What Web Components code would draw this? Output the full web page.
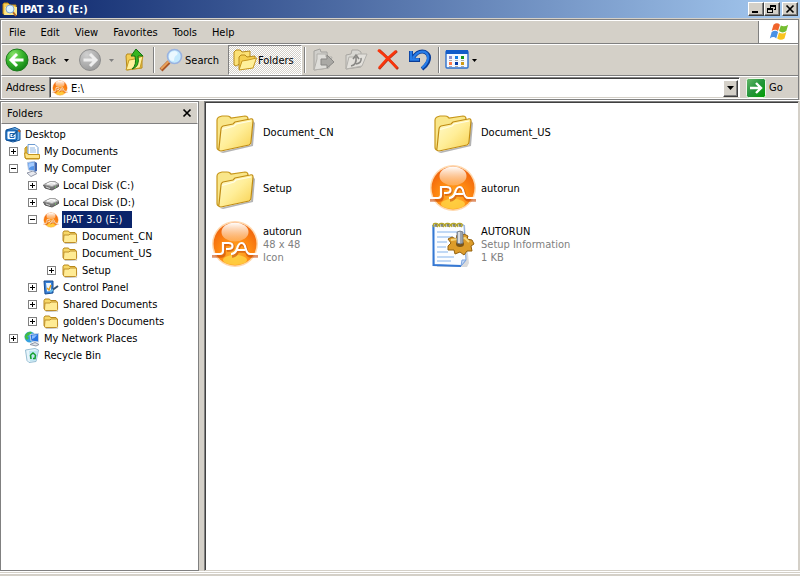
<!DOCTYPE html>
<html lang="en">
<head>
<meta charset="utf-8">
<title>IPAT 3.0 (E:)</title>
<style>
  :root {
    --face: #d4d0c8; --shadow: #808080; --dark: #404040; --navy: #0a246a;
    font: 11px/13px "DejaVu Sans Condensed", "Noto Sans", sans-serif;
    color: #000;
  }
  body { margin: 0; }
</style>
</head>
<body>
<explorer-window>
  <title-bar slot="title" icon="search-folder">IPAT 3.0 (E:)</title-bar>
  <menu-bar slot="menu" items="File,Edit,View,Favorites,Tools,Help"></menu-bar>
  <tool-bar slot="tools">
    <tool-button icon="back" kind="wide">Back</tool-button>
    <tool-button kind="arrow" name="Back history"></tool-button>
    <tool-button icon="forward" kind="nav" name="Forward"></tool-button>
    <tool-button kind="arrow" name="Forward history" dim></tool-button>
    <tool-button icon="up" kind="nav" name="Up"></tool-button>
    <tool-separator></tool-separator>
    <tool-button icon="search" kind="search">Search</tool-button>
    <tool-button icon="folders" kind="pressed">Folders</tool-button>
    <tool-separator></tool-separator>
    <tool-button icon="move" name="Move to"></tool-button>
    <tool-button icon="copy" name="Copy to"></tool-button>
    <tool-button icon="delete" name="Delete"></tool-button>
    <tool-button icon="undo" name="Undo"></tool-button>
    <tool-separator></tool-separator>
    <tool-button icon="views" kind="views" name="Views"></tool-button>
  </tool-bar>
  <address-bar slot="address" icon="pa" value="E:\"></address-bar>
  <folder-pane slot="side" heading="Folders">
    <tree-item level="0" icon="desktop">Desktop</tree-item>
    <tree-item level="1" icon="mydocs" state="closed">My Documents</tree-item>
    <tree-item level="1" icon="computer" state="open">My Computer</tree-item>
    <tree-item level="2" icon="disk" state="closed">Local Disk (C:)</tree-item>
    <tree-item level="2" icon="disk" state="closed">Local Disk (D:)</tree-item>
    <tree-item level="2" icon="pa" state="open" selected>IPAT 3.0 (E:)</tree-item>
    <tree-item level="3" icon="folder">Document_CN</tree-item>
    <tree-item level="3" icon="folder">Document_US</tree-item>
    <tree-item level="3" icon="folder" state="closed">Setup</tree-item>
    <tree-item level="2" icon="control" state="closed">Control Panel</tree-item>
    <tree-item level="2" icon="folder" state="closed">Shared Documents</tree-item>
    <tree-item level="2" icon="folder" state="closed">golden's Documents</tree-item>
    <tree-item level="1" icon="network" state="closed">My Network Places</tree-item>
    <tree-item level="1" icon="recycle">Recycle Bin</tree-item>
  </folder-pane>
  <file-list slot="files">
    <file-item icon="bigfolder">Document_CN</file-item>
    <file-item icon="bigfolder">Document_US</file-item>
    <file-item icon="bigfolder">Setup</file-item>
    <file-item icon="pa">autorun</file-item>
    <file-item icon="pa">autorun<span slot="info">48 x 48</span><span slot="info">Icon</span></file-item>
    <file-item icon="setup">AUTORUN<span slot="info">Setup Information</span><span slot="info">1 KB</span></file-item>
  </file-list>
</explorer-window>

<script>
const ICONS = {
  pa: ['0 0 48 48', `<defs><radialGradient id="pa-disc" cx=".5" cy=".75" r=".75"><stop offset="0" stop-color="#ffb52e"/><stop offset=".5" stop-color="#ff8a12"/><stop offset="1" stop-color="#ee5f0c"/></radialGradient><linearGradient id="pa-shine" x1="0" y1="0" x2="0" y2="1"><stop offset="0" stop-color="#fff"/><stop offset="1" stop-color="#ffc58a" stop-opacity=".5"/></linearGradient></defs>
    <circle cx="24" cy="24" r="23" fill="#ffd9ae"/><circle cx="24" cy="24" r="21.500" fill="url(#pa-disc)"/><ellipse cx="24" cy="40" rx="12" ry="5" fill="#ffdc4a" opacity=".7"/><ellipse cx="24" cy="12" rx="13.500" ry="9.500" fill="url(#pa-shine)"/>
    <path d="M1 36H10Q13 36 13 33V24H18Q22 24 22 27T18 30H16M21 36Q25 36 27 30Q28 24 31 24T35 29Q36 36 40 36H47M27 31H34" fill="none" stroke="#c84a06" stroke-width="3.500" opacity=".6"/>
    <path d="M0 34H9Q12 34 12 31V23H17.500Q21.500 23 21.500 26T17.500 29H15M20 34Q24 34 26 29Q27.500 23 30.500 23T34.500 28Q36 34 39 34H48M26 30H34" fill="none" stroke="#fff" stroke-width="2.200"/>`],
  bigfolder: ['0 0 48 48', `<defs><linearGradient id="bf" x1="0" y1="0" x2="1" y2="1"><stop offset="0" stop-color="#fffbd0"/><stop offset=".5" stop-color="#ffee98"/><stop offset="1" stop-color="#f7cf4c"/></linearGradient></defs>
    <path d="M9 44L40 37L42 13L44 15L42 38L12 45Z" fill="#444" opacity=".4"/>
    <path d="M6 12Q6 10 8 9L11 8H16Q18 8 19 9L20 10L34 8Q37 8 37 11V16L8 42Q6 42 6 39Z" fill="#f9e68a" stroke="#c8981c" stroke-width="1.200"/>
    <path d="M10 21Q10 19 12 18L22 16L24 14L39 11Q42 10 42 13L40 34Q40 36 38 37L10 43Q7 43 8 40Z" fill="url(#bf)" stroke="#c08c14" stroke-width="1.200"/><path d="M11 21.500L23 18L25 16L40 13" stroke="#fffde8" fill="none" stroke-width="1.200"/>`],
  folder: ['0 0 16 16', `<path d="M2 13.500L14.500 14.500L15.500 6L15 15H3Z" fill="#777" opacity=".4"/><path d="M1 3.500L2 2H6.500L7.500 3.500H13L14 5V12.500H2L1 11.500Z" fill="#f6d768" stroke="#b8891c"/><path d="M2 6H7L8 5H14.500V12.500Q14.500 13.500 13.500 13.500H2.500Q1.500 13.500 1.500 12Z" fill="#ffeb94" stroke="#c0902a"/>`],
  'search-folder': ['0 0 16 16', `<path d="M1 13V3L2 2H6L8 4H14V13H2Z" fill="#f5cd55" stroke="#b88512"/><path d="M2 14L3 6H15V14Z" fill="#ffe98a"/><path d="M10.500 10.500L14 15" stroke="#b56a2b" stroke-width="2"/><circle cx="8" cy="8" r="4" fill="#d9f2ff" stroke="#83a7cd"/>`],
  desktop: ['0 0 16 16', `<path d="M1 3L10 .500L15 3V13L8 15L1 13Z" fill="#6fb2ea" stroke="#0e5097"/><rect x="1" y="3" width="11" height="10.500" rx="2" fill="#2e85d6" stroke="#0e5097"/><rect x="2.500" y="4.500" width="8" height="7.500" rx="1" fill="#fff"/><path d="M9 6.500H5V10.500H9V9" fill="none" stroke="#1b64b4"/><path d="M7 9L13 3.500" stroke="#155a9c" stroke-width="1.600"/><path d="M13.500 3L15 5" stroke="#d76318" stroke-width="2"/>`],
  mydocs: ['0 0 16 16', `<path d="M1 4L3 2.500V13H15V15H2L1 14Z" fill="#f3c94b" stroke="#bd8f1a"/><path d="M4 .500H11L14 3.500V12H4Z" fill="#fff" stroke="#6d9bd1"/><path d="M6 4H11M6 6H12M6 8H12" stroke="#8fb6e4"/><path d="M.500 9H3L4 10.500H15.500V14.500H1.500Z" fill="#ffe485" stroke="#c4941d"/>`],
  computer: ['0 0 16 16', `<path d="M3 12L9 10L13 12.500L7 15.500Z" fill="#e7e9ef" stroke="#9298a8"/><path d="M3.500 1.500L10.500 .500V10L4.500 9Z" fill="#5696ea" stroke="#b8c8e0"/><path d="M4.500 2.500L10 1.500V5Q7 5 5 7Z" fill="#a4cbff"/><path d="M10.500 .500L13 2V10L10.500 11Z" fill="#3d64b0"/>`],
  disk: ['0 0 16 16', `<path d="M.500 7L7 4H12L15.500 6V8.500L9 12L2 10Z" fill="#777" stroke="#555"/><path d="M1 6.500L7 3.500H12L15.500 6L9 8.500Z" fill="#e2e2e2" stroke="#a2a2a2"/><path d="M4 6L8 4.500L12 5.500" stroke="#fff" fill="none"/><path d="M3 9L7 10.500" stroke="#cfcfcf"/><path d="M12 9H13" stroke="#72e25f"/>`],
  control: ['0 0 16 16', `<path d="M1 1L10 1V13L2 14Z" fill="#357fd7" stroke="#174c94"/><path d="M3 3L8 3V11L4 11.500Z" fill="#eaf6ff"/><path d="M4 8L6 10L8 5" stroke="#e4a020" stroke-width="1.500" fill="none"/><path d="M8 11L15 6" stroke="#35516f" stroke-width="2"/><path d="M7 12L10 9.500" stroke="#66bced" stroke-width="2"/>`],
  network: ['0 0 16 16', `<circle cx="6" cy="6" r="5.500" fill="#35a0df"/><path d="M1 4Q4 0 8 1L6 4L3 5L5 7L3 9Q0 7 1 4Z" fill="#42bd42"/><path d="M6 3.500L14.500 2.500V11L7 10Z" fill="#2874e1" stroke="#c6d2e2"/><path d="M8 4.500L13 4Q11 7 8 8Z" fill="#8dbdff"/><path d="M6 13.500L11 11.500L15 13.500L12 15Z" fill="#e1e4e9" stroke="#8f98a8"/>`],
  recycle: ['0 0 16 16', `<path d="M1.500 2L11 .500L14.500 2L12 13.500L5 14.500L3 12.500Z" fill="#e7f5fb" stroke="#95bdd3"/><path d="M5 3L14 2.500L12 12.500L6 13.500Z" fill="#b7e1ef" opacity=".8"/><path d="M6.500 7L9 5L11.500 7M11.500 7L11 10.500H9M6.500 7L7 11" stroke="#14a02b" stroke-width="1.600" fill="none"/>`],
  setup: ['0 0 48 48', `<path d="M8 5H36L40 43L38 47H8Z" fill="#999" opacity=".35"/><path d="M4 5H35L37 40L32 46L5 45Z" fill="#fbfdff" stroke="#7ba3de" stroke-width="1"/>
    <path d="M4.500 5V45L32 46" fill="none" stroke="#3478d4" stroke-width="2"/><path d="M32 46L33 40H37Z" fill="#c9dcf6" stroke="#7ba3de"/>
    <path d="M8 12H28M8 17H24M8 22H18M8 27H17M8 32H19M8 37H25M8 41H22" stroke="#86b4ec" stroke-width="1.200"/>
    <path d="M5 7Q3 3 7 3.500T8 7M11 7Q9 3 13 3.500T14 7M17 7Q15 3 19 3.500T20 7M23 7Q21 3 25 3.500T26 7M29 7Q27 3 31 3.500T32 7" stroke="#b5a52a" stroke-width="1.500" fill="none"/><path d="M7 4V7M13 4V7M19 4V7M25 4V7M31 4V7" stroke="#4a4520"/>
    <path d="M28 15L33 16L35 14L39 16L38 19L43 20L45 24L42 26L43 31L38 31L35 35L31 32L26 34L25 30L19 30L19 26L22 23L19 19L23 17L27 19Z" fill="#dd9c2a" stroke="#94620f"/><path d="M22 20L29 19L36 18L40 22" stroke="#f8d67a" stroke-width="2" fill="none"/><ellipse cx="31" cy="24" rx="4" ry="3" fill="#7a5418"/><path d="M28 12Q31 10 34 12V23Q31 25 28 23Z" fill="#9ca4ad" stroke="#6c7580" stroke-width=".800"/><path d="M30 12V23" stroke="#eee" stroke-width="1.500"/>`],
  back: ['0 0 24 24', `<defs><radialGradient id="bk" cx=".35" cy=".25" r=".8"><stop offset="0" stop-color="#8ce36c"/><stop offset=".5" stop-color="#37b42c"/><stop offset="1" stop-color="#128016"/></radialGradient></defs><circle cx="12" cy="12" r="11" fill="url(#bk)" stroke="#1d7b1d"/><path d="M12 6L6 12L12 18M7 12H18.500" stroke="#fff" stroke-width="3" fill="none"/>`],
  forward: ['0 0 24 24', `<defs><radialGradient id="fw" cx=".35" cy=".25" r=".8"><stop offset="0" stop-color="#d0d0d0"/><stop offset="1" stop-color="#989898"/></radialGradient></defs><circle cx="12" cy="12" r="10.500" fill="url(#fw)" stroke="#8e8e8e"/><path d="M12 6L18 12L12 18M17 12H5.500" stroke="#eee" stroke-width="3" fill="none"/>`],
  up: ['0 0 24 24', `<path d="M3 8L4 6H9L11 8L19 7V20L4 22Z" fill="#f4ce54" stroke="#b68a1b"/><path d="M3 22L6 12L12 11L20 8L17 20Z" fill="#fff09c" stroke="#c59925"/><path d="M9 21Q17 19 15 8H20L13 1L8 8H12Q14 17 9 21Z" fill="#35b51f" stroke="#147210"/>`],
  search: ['0 0 24 24', `<path d="M2 22L10 14" stroke="#a95526" stroke-width="4"/><path d="M2 21L10 13" stroke="#e9a25a" stroke-width="2"/><circle cx="15.500" cy="8.500" r="7" fill="#c5eafe" stroke="#9ab3e0" stroke-width="1.600"/><path d="M10 9Q10 3 16 3Q20 4 18 7Q15 8 15 13Q10 13 10 9Z" fill="#fff" opacity=".65"/>`],
  folders: ['0 0 24 24', `<path d="M1 17V4L3 2H7L9 4L17 3V10L3 18Z" fill="#fbe176" stroke="#b88a1a"/><path d="M6 21V9L8 7H12L14 9L22 8V12L18 20Z" fill="#f4cf50" stroke="#b88a1a"/><path d="M6 22L9 13L15 12L23.500 10L20 20Z" fill="#fff09a" stroke="#c7971e"/>`],
  move: ['0 0 24 24', `<path d="M2 3L8 1L9 4H15L16 20L2 22Z" fill="#d0cfcb" stroke="#a3a29e"/><path d="M5 6H14V9H20L17 20L2 22L5 11Z" fill="#dfdeda" stroke="#b2b0ab"/><path d="M9 11H15V7L22 14L15 20V17H9Z" fill="#aaa9a5" stroke="#888784"/>`],
  copy: ['0 0 24 24', `<path d="M2 7L7 6L8 2H14L17 4V19L2 21Z" fill="#d8d7d2" stroke="#a8a6a1"/><path d="M2 21L5 9H12L14 6H23L18 18Z" fill="#e2e0db" stroke="#b2b0ab"/><path d="M7 18Q13 17 12 9M9 11L12 7L15 11M12 16Q18 15 17 10" fill="none" stroke="#888784" stroke-width="1.600"/>`],
  delete: ['0 0 24 24', `<path d="M3 2Q11 9 22 21M21 3Q11 11 3 21" stroke="#b8341a" stroke-width="2.600" fill="none"/><path d="M2 2Q11 9 21 20M20 3Q10 11 3 20" stroke="#fa350b" stroke-width="2.400" fill="none"/>`],
  undo: ['0 0 24 24', `<path d="M3 3V12H12M5 10Q10 2 17 4Q23 7 20 14Q18 18 14 21" fill="none" stroke="#0a3c96" stroke-width="4"/><path d="M3 3V11.500H11M5 10Q10 2 17 4Q22 7 19 14Q17 18 14 20" fill="none" stroke="#287de8" stroke-width="2.400"/>`],
  views: ['0 0 24 24', `<rect x="1" y="3" width="22" height="17" rx="1" fill="#f4f9ff" stroke="#2d70cd" stroke-width="1.400"/><path d="M1 2H23V6H1Z" fill="#125cc9"/><path d="M4 8H7V11H4Z" fill="#8e8ed0"/><path d="M10 8H13V11H10Z" fill="#147de6"/><path d="M16 8H19V11H16Z" fill="#12961b"/><path d="M4 14H7V17H4Z" fill="#ff7746"/><path d="M10 14H13V17H10Z" fill="#063ba6"/><path d="M16 14H19V17H16Z" fill="#d09b13"/><path d="M4 12.500H7M10 12.500H13M16 12.500H19M4 18.500H7M10 18.500H13M16 18.500H19" stroke="#aaa"/>`],
  go: ['0 0 20 20', `<defs><linearGradient id="go" x1="0" y1="0" x2="1" y2="1"><stop offset="0" stop-color="#67b96b"/><stop offset=".5" stop-color="#24943b"/><stop offset="1" stop-color="#00a000"/></linearGradient></defs><rect x=".500" y=".500" width="19" height="19" rx="2" fill="url(#go)" stroke="#eef8e9"/><path d="M4 10H15M10 5L15 10L10 15" fill="none" stroke="#fff" stroke-width="2.400"/>`],
  flag: ['0 0 24 24', `<path d="M6 4Q10 1 13 4L11 11Q8 8 4 11Z" fill="#f0642b"/><path d="M14 5Q18 7 22 4L20 11Q16 14 12 11Z" fill="#75bd31"/><path d="M4 12Q8 9 11 12L9 19Q6 16 2 19Z" fill="#4a91e4"/><path d="M12 12.500Q16 15 20 12L18 19Q14 22 10 19Z" fill="#f9c31e"/>`],
  minimize: ['0 0 12 10', `<path d="M2 7H8V9H2Z"/>`],
  restore: ['0 0 12 10', `<path d="M4.500 1V5M4 1H10M4 2H10M9.500 1V6M8 5.500H10M1.500 4V9M1 4H7M1 5H7M6.500 4V9M1 8.500H7" fill="none" stroke="#000" shape-rendering="crispEdges"/>`],
  close: ['0 0 12 10', `<path d="M2.500 1.500L9.500 8.500M9.500 1.500L2.500 8.500" stroke="#000" stroke-width="1.700"/>`],
  down: ['0 0 7 4', `<path d="M0 0H7L3.500 4Z" fill="currentColor"/>`]
};
const icon = (name, cls = '') => {
  const [box, art] = ICONS[name];
  return `<svg class="${cls}" viewBox="${box}" aria-hidden="true">${art}</svg>`;
};
const RESET = `:host{box-sizing:border-box}*{box-sizing:border-box}svg{display:block;flex:none}
  button{font:inherit;color:inherit;background:none;border:0;padding:0;margin:0;display:flex;align-items:center;white-space:nowrap}
  .raised{background:var(--face);border:1px solid;border-color:#fff var(--dark) var(--dark) #fff;box-shadow:inset -1px -1px var(--shadow);justify-content:center}`;
const define = (tag, render) => customElements.define(tag, class extends HTMLElement {
  constructor() { super(); this.attachShadow({ mode: 'open' }); }
  connectedCallback() {
    const t = document.createElement('template');
    t.innerHTML = `<style>${RESET}</style>` + render(this);
    this.shadowRoot.replaceChildren(t.content.cloneNode(true));
  }
});

define('explorer-window', () => `<style>
  :host{display:flex;flex-direction:column;height:100vh;background:var(--face)}
  .bars{margin:1px 1px 0 0;border:1px solid var(--shadow)}
  main{flex:1;min-height:0;display:flex;gap:5px;border-top:1px solid #fff}
  ::slotted([slot=side]){flex:0 0 199px}
  ::slotted([slot=files]){flex:1}
  footer{height:5px;background:linear-gradient(#fff 1px,var(--face) 1px 2px,#fff 2px 3px,var(--face) 3px)}
  </style><slot name="title"></slot><div class="bars"><slot name="menu"></slot><slot name="tools"></slot><slot name="address"></slot></div>
  <main><slot name="side"></slot><slot name="files"></slot></main><footer></footer>`);

define('title-bar', el => `<style>
  :host{display:flex;align-items:center;height:18px;padding:0 2px;background:linear-gradient(to right,var(--navy),#a6caf0);color:#fff;font-weight:bold}
  svg.app{width:16px;height:16px;margin-right:2px}
  h1{flex:1;margin:0;font-size:11px}
  button{width:16px;height:14px}button svg{width:12px;height:10px}.x{margin-left:2px}
  </style>${icon(el.getAttribute('icon'), 'app')}<h1><slot></slot></h1>
  <button class="raised" aria-label="Minimize">${icon('minimize')}</button><button class="raised" aria-label="Restore">${icon('restore')}</button><button class="raised x" aria-label="Close">${icon('close')}</button>`);

define('menu-bar', el => `<style>
  :host{display:flex;height:24px;border:1px solid #fff;border-width:1px 0 0 1px;border-bottom:1px solid var(--shadow)}
  nav{flex:1;display:flex;border-right:1px solid var(--shadow)}
  button{padding:0 8px 0 7px}
  .flag{width:39px;background:#fff;display:flex;justify-content:center;align-items:center;border-left:1px solid #fff}
  .flag svg{width:22px;height:22px}
  </style><nav>${el.getAttribute('items').split(',').map(t => `<button>${t}</button>`).join('')}</nav><div class="flag">${icon('flag')}</div>`);

define('tool-bar', () => `<style>
  :host{display:flex;align-items:stretch;height:32px;padding-left:3px;border:1px solid #fff;border-right:0;border-bottom:1px solid var(--shadow)}
  </style><slot></slot>`);

define('tool-separator', () => `<style>
  :host{flex:none;width:2px;margin:2px;border-left:1px solid var(--shadow);border-right:1px solid #fff}</style>`);

define('tool-button', el => {
  const kind = el.getAttribute('kind') || 'plain', pic = el.getAttribute('icon'), name = el.getAttribute('name');
  return `<style>
  :host{display:flex;flex:none}
  button{flex:1;gap:3px}
  svg{width:24px;height:24px}
  svg.down{width:5px;height:3px}
  .plain{width:32px;justify-content:center}
  .wide{width:56px}
  .arrow{width:17px;padding-left:3px}
  .nav{width:28px}
  .search{width:71px;padding-left:2px;gap:2px}
  .views{width:39px;padding-left:3px}
  .dim{color:var(--shadow)}
  .pressed{width:74px;padding-left:4px;gap:1px;border:1px solid;border-color:var(--shadow) #fff #fff var(--shadow);
    background:repeating-conic-gradient(#fff 0 25%,var(--face) 0 50%) 0 0/2px 2px}
  </style><button class="${kind}${el.hasAttribute('dim') ? ' dim' : ''}" ${name ? `aria-label="${name}"` : ''} ${kind === 'pressed' ? 'aria-pressed="true"' : ''}>${pic ? icon(pic) : ''}<slot></slot>${kind === 'arrow' || kind === 'views' ? icon('down', 'down') : ''}</button>`;
});

define('address-bar', el => `<style>
  :host{display:flex;align-items:center;height:23px;padding-left:4px;border:1px solid #fff;border-right:0}
  label{width:43px}
  .box{flex:1;display:flex;align-items:center;height:21px;background:#fff;border:1px solid;border-color:var(--shadow) #fff var(--face) var(--shadow);box-shadow:inset 1px 1px var(--dark);padding:2px 1px 1px 2px}
  .box svg.drive{width:16px;height:16px}
  input{flex:1;min-width:0;height:16px;border:0;outline:0;padding:0 0 0 3px;background:none;font:inherit;color:inherit}
  .box button{width:15px;height:17px}svg.down{width:7px;height:4px}
  .go{width:58px;padding-left:6px;gap:3px}.go svg{width:20px;height:20px}
  </style><label for="a">Address</label><div class="box">${icon(el.getAttribute('icon'), 'drive')}<input id="a" value="${el.getAttribute('value')}"><button class="raised" aria-label="Show addresses">${icon('down', 'down')}</button></div><button class="go">${icon('go')}Go</button>`);

define('folder-pane', el => `<style>
  :host{display:flex;flex-direction:column;background:#fff;border:1px solid var(--shadow)}
  header{display:flex;align-items:center;justify-content:space-between;height:22px;padding:0 4px 0 5px;background:var(--face);border:1px solid #fff;border-bottom:1px solid var(--shadow)}
  h2{margin:0;font-size:11px;font-weight:normal}
  svg{width:12px;height:10px}
  .tree{padding-top:2px;overflow:hidden}
  </style><header><h2>${el.getAttribute('heading')}</h2><button aria-label="Close folders">${icon('close')}</button></header><div class="tree" role="tree"><slot></slot></div>`);

define('tree-item', el => {
  const level = +el.getAttribute('level'), state = el.getAttribute('state');
  return `<style>
  :host{display:flex;align-items:center;height:17px;padding-left:${level ? level * 19 - 11 : 4}px;white-space:nowrap}
  .toggle{width:9px;height:9px;margin-right:6px;flex:none}
  button.toggle{border:1px solid var(--shadow);background:linear-gradient(#000,#000) center/5px 1px no-repeat${state === 'closed' ? ',linear-gradient(#000,#000) center/1px 5px no-repeat' : ''}}
  svg{width:16px;height:16px;margin-right:3px}
  .label{padding:2px 10px 2px 1px;height:17px}
  :host([selected]) .label{background:var(--navy);color:#fff}
  </style>${state ? `<button class="toggle" aria-label="${state === 'open' ? 'Collapse' : 'Expand'}"></button>` : level ? '<span class="toggle"></span>' : ''}${icon(el.getAttribute('icon'))}<span class="label"><slot></slot></span>`;
});

define('file-list', () => `<style>
  :host{display:grid;grid-template-columns:repeat(auto-fill,218px);grid-auto-rows:56px;align-content:start;padding:2px 0 0 6px;background:#fff;
    border:1px solid;border-color:var(--shadow) var(--face) var(--face) var(--shadow);box-shadow:inset 1px 1px var(--dark);margin-right:1px}
  </style><slot></slot>`);

define('file-item', el => `<style>
  :host{display:flex;align-items:center;gap:4px}
  svg{width:48px;height:48px}
  .text{display:flex;flex-direction:column}
  .info{display:contents;color:var(--shadow)}
  </style>${icon(el.getAttribute('icon'))}<div class="text"><span><slot></slot></span><div class="info"><slot name="info"></slot></div></div>`);
</script>
</body>
</html>
